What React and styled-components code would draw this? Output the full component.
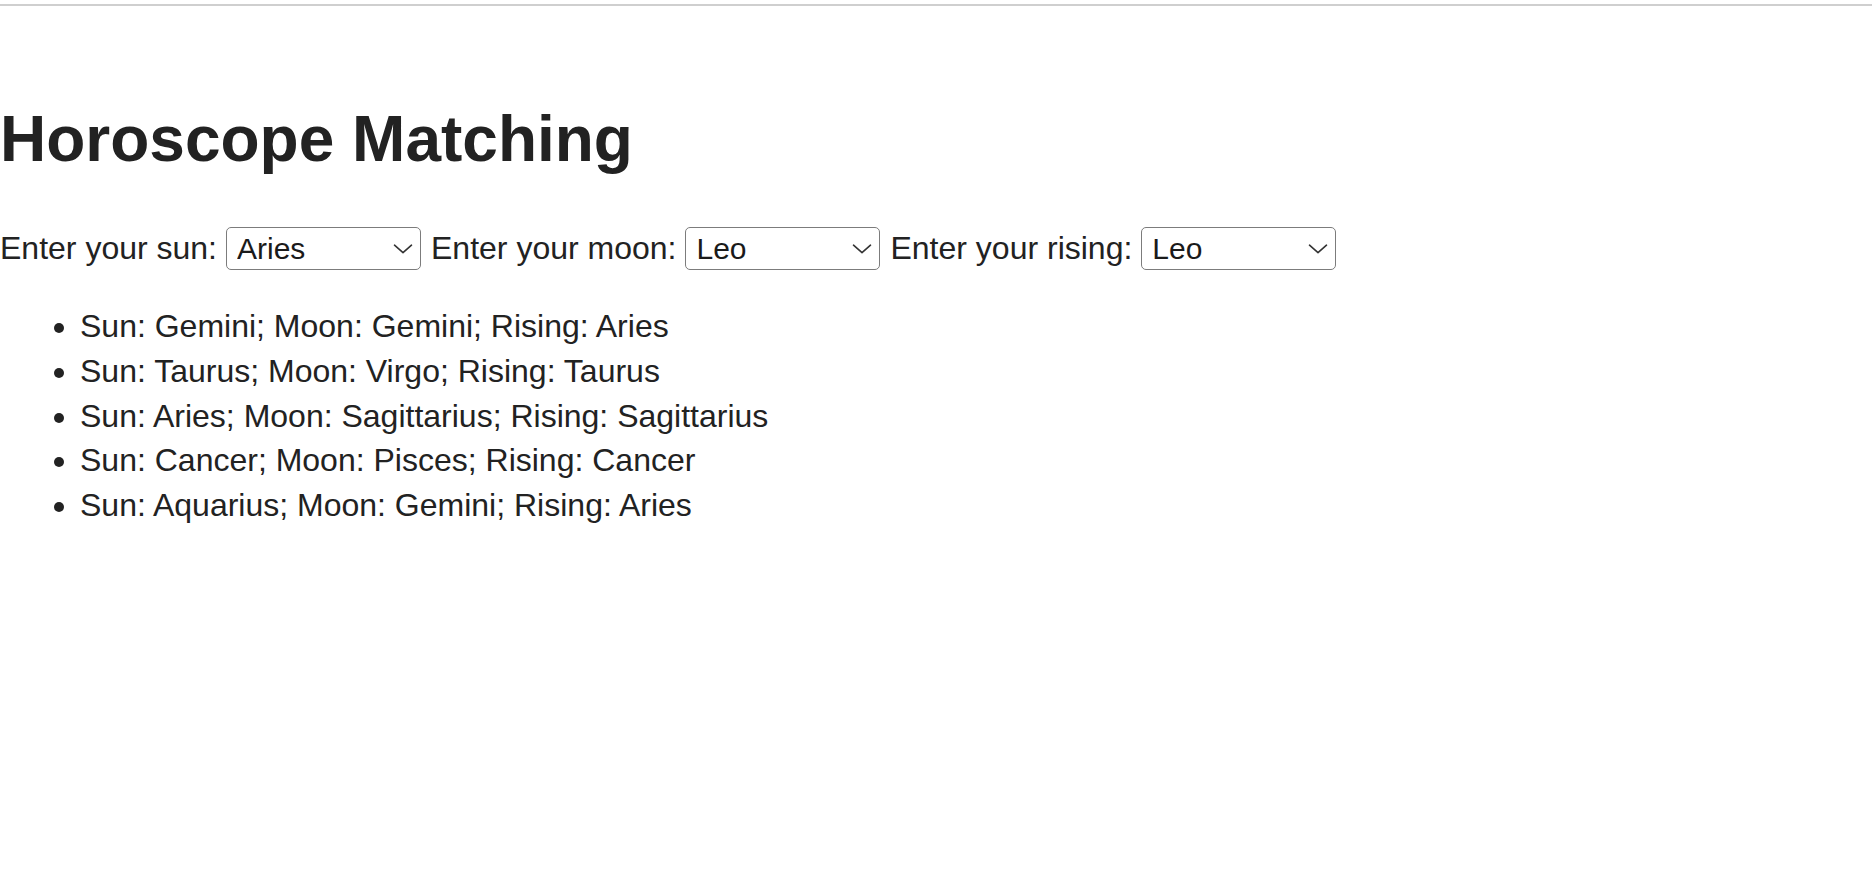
import React, { useState } from 'react'
import styled, { createGlobalStyle } from 'styled-components'

const GlobalStyle = createGlobalStyle`
  body {
    margin: 0;
    background: #fff;
    color: #222;
    font-family: "Liberation Sans", Arial, Helvetica, sans-serif;
  }
`

const TopRule = styled.div`
  height: 2px;
  margin-top: 4px;
  background: #cfcfcf;
`

const Title = styled.h1`
  margin: 96px 0 0;
  font-size: 64px;
  font-weight: 700;
  line-height: normal;
  color: #222;
`

const Form = styled.div`
  display: flex;
  align-items: center;
  gap: 10.5px;
  margin-top: 51px;
  font-size: 32px;
  line-height: normal;
  height: 43px;
`

const Label = styled.label`
  display: flex;
  align-items: center;
  gap: 9px;
`

const SelectWrap = styled.span`
  position: relative;
  display: inline-block;
  height: 43px;
`

const Select = styled.select`
  appearance: none;
  -webkit-appearance: none;
  box-sizing: border-box;
  width: 194.5px;
  height: 43px;
  padding: 0 30px 0 10px;
  border: 1.5px solid #7c7c7c;
  border-radius: 5px;
  background: #fff;
  color: #1a1a1a;
  font-family: "Liberation Sans", Arial, Helvetica, sans-serif;
  font-size: 30px;
  outline: none;
`

const Chevron = styled.svg`
  position: absolute;
  right: 8px;
  top: 16.5px;
  width: 20px;
  height: 10px;
  pointer-events: none;
`

const List = styled.ul`
  margin: 34px 0 0;
  padding-left: 80px;
  font-size: 32px;
`

const Item = styled.li`
  line-height: 44.8px;
`

const signs = ['Aries', 'Taurus', 'Gemini', 'Cancer', 'Leo', 'Virgo', 'Libra', 'Scorpio', 'Sagittarius', 'Capricorn', 'Aquarius', 'Pisces']

const matches = [
  { sun: 'Gemini', moon: 'Gemini', rising: 'Aries' },
  { sun: 'Taurus', moon: 'Virgo', rising: 'Taurus' },
  { sun: 'Aries', moon: 'Sagittarius', rising: 'Sagittarius' },
  { sun: 'Cancer', moon: 'Pisces', rising: 'Cancer' },
  { sun: 'Aquarius', moon: 'Gemini', rising: 'Aries' },
]

function SignPicker({ label, value, onChange }) {
  return (
    <Label>
      {label}
      <SelectWrap>
        <Select value={value} onChange={(e) => onChange(e.target.value)}>
          {signs.map((s) => <option key={s} value={s}>{s}</option>)}
        </Select>
        <Chevron viewBox="0 0 20 10">
          <path d="M1.5 1.2 L10 8.6 L18.5 1.2" fill="none" stroke="#333" strokeWidth="1.6" strokeLinecap="round" strokeLinejoin="round" />
        </Chevron>
      </SelectWrap>
    </Label>
  )
}

export default function App() {
  const [sun, setSun] = useState('Aries')
  const [moon, setMoon] = useState('Leo')
  const [rising, setRising] = useState('Leo')

  return (
    <>
      <GlobalStyle />
      <TopRule />
      <Title>Horoscope Matching</Title>
      <Form>
        <SignPicker label="Enter your sun:" value={sun} onChange={setSun} />
        <SignPicker label="Enter your moon:" value={moon} onChange={setMoon} />
        <SignPicker label="Enter your rising:" value={rising} onChange={setRising} />
      </Form>
      <List>
        {matches.map((m, i) => (
          <Item key={i}>Sun: {m.sun}; Moon: {m.moon}; Rising: {m.rising}</Item>
        ))}
      </List>
    </>
  )
}
